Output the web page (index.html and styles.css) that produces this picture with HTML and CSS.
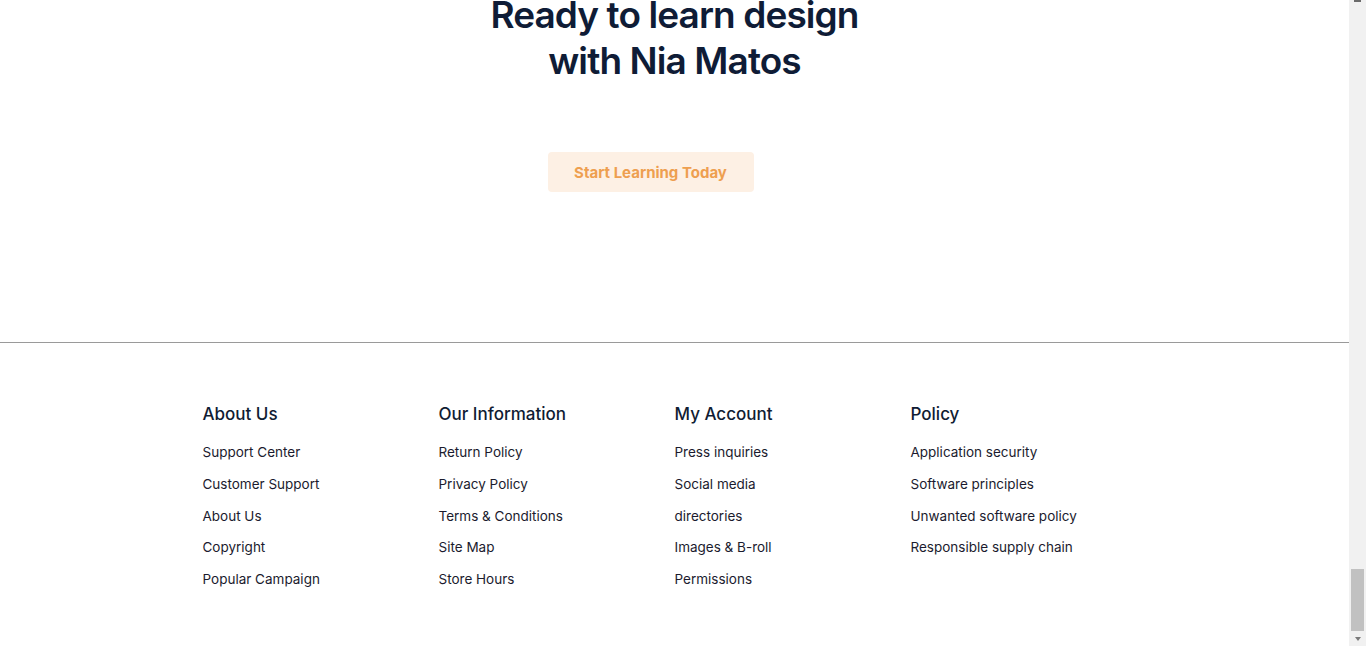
FILE: index.html
```html
<!DOCTYPE html>
<html lang="en">
<head>
<meta charset="utf-8">
<title>Ready to learn design</title>
<link rel="stylesheet" href="styles.css">
</head>
<body>
<div class="page">
  <main class="content">
    <section class="cta">
      <h2 class="cta-title">Ready to learn design<br>with Nia Matos</h2>
      <a class="cta-button" href="#">Start Learning Today</a>
    </section>
    <footer class="footer">
      <div class="footer-grid">
        <div class="footer-col">
          <h3 class="footer-heading">About Us</h3>
          <ul class="footer-links">
            <li>Support Center</li>
            <li>Customer Support</li>
            <li>About Us</li>
            <li>Copyright</li>
            <li>Popular Campaign</li>
          </ul>
        </div>
        <div class="footer-col">
          <h3 class="footer-heading">Our Information</h3>
          <ul class="footer-links">
            <li>Return Policy</li>
            <li>Privacy Policy</li>
            <li>Terms &amp; Conditions</li>
            <li>Site Map</li>
            <li>Store Hours</li>
          </ul>
        </div>
        <div class="footer-col">
          <h3 class="footer-heading">My Account</h3>
          <ul class="footer-links">
            <li>Press inquiries</li>
            <li>Social media</li>
            <li>directories</li>
            <li>Images &amp; B-roll</li>
            <li>Permissions</li>
          </ul>
        </div>
        <div class="footer-col">
          <h3 class="footer-heading">Policy</h3>
          <ul class="footer-links">
            <li>Application security</li>
            <li>Software principles</li>
            <li>Unwanted software policy</li>
            <li>Responsible supply chain</li>
          </ul>
        </div>
      </div>
    </footer>
  </main>
  <div class="scrollbar" aria-hidden="true">
    <div class="scroll-up"><span class="arrow-up-tip"></span></div>
    <div class="scroll-track"><div class="scroll-thumb"></div></div>
    <div class="scroll-down"><span class="arrow-down"></span></div>
  </div>
</div>
</body>
</html>
```
FILE: styles.css
```css
html, body {
  margin: 0;
  height: 100%;
  overflow: hidden;
}
body {
  background: #ffffff;
  font-family: Inter, "Open Sans", Arial, sans-serif;
  color: #1b1b2e;
}
.page {
  display: flex;
  height: 646px;
}
.content {
  width: 1349px;
  flex: none;
  overflow: hidden;
}
.cta {
  display: flex;
  flex-direction: column;
  align-items: center;
  padding-top: 0;
  padding-bottom: 150px;
  border-bottom: 1px solid #9a9a9a;
}
.cta-title {
  margin: -8px 0 0;
  font-size: 37px;
  line-height: 46px;
  font-weight: 600;
  letter-spacing: -0.9px;
  color: #0f1c36;
  text-align: center;
}
.cta-button {
  margin-top: 68px;
  margin-left: -48px;
  display: flex;
  align-items: center;
  justify-content: center;
  width: 206px;
  height: 40px;
  background: #fdf0e4;
  border-radius: 4px;
  color: #ee9f50;
  font-size: 15px;
  font-weight: 700;
  text-decoration: none;
}
.footer {
  padding-top: 59px;
}
.footer-grid {
  display: grid;
  grid-template-columns: repeat(4, 236px);
  justify-content: center;
}
.footer-heading {
  margin: 0 0 16px;
  font-size: 17px;
  line-height: 24px;
  font-weight: 500;
  color: #101c33;
}
.footer-links {
  list-style: none;
  margin: 0;
  padding: 0;
  display: flex;
  flex-direction: column;
  gap: 11.75px;
}
.footer-links li {
  font-size: 13.5px;
  line-height: 20px;
  color: #1b1b2e;
}
.scrollbar {
  width: 17px;
  flex: none;
  background: #f1f1f1;
  display: flex;
  flex-direction: column;
}
.scroll-up {
  height: 4px;
  display: flex;
  justify-content: center;
}
.arrow-up-tip {
  width: 7px;
  height: 2px;
  background: #6b6b6b;
}
.scroll-track {
  flex: 1;
  display: flex;
  flex-direction: column;
  justify-content: flex-end;
  padding: 0 2px;
}
.scroll-thumb {
  height: 62px;
  background: #c1c1c1;
}
.scroll-down {
  height: 15px;
  display: flex;
  justify-content: center;
  align-items: center;
}
.arrow-down {
  width: 0;
  height: 0;
  border-left: 3.5px solid transparent;
  border-right: 3.5px solid transparent;
  border-top: 4px solid #7a7a7a;
}
```
